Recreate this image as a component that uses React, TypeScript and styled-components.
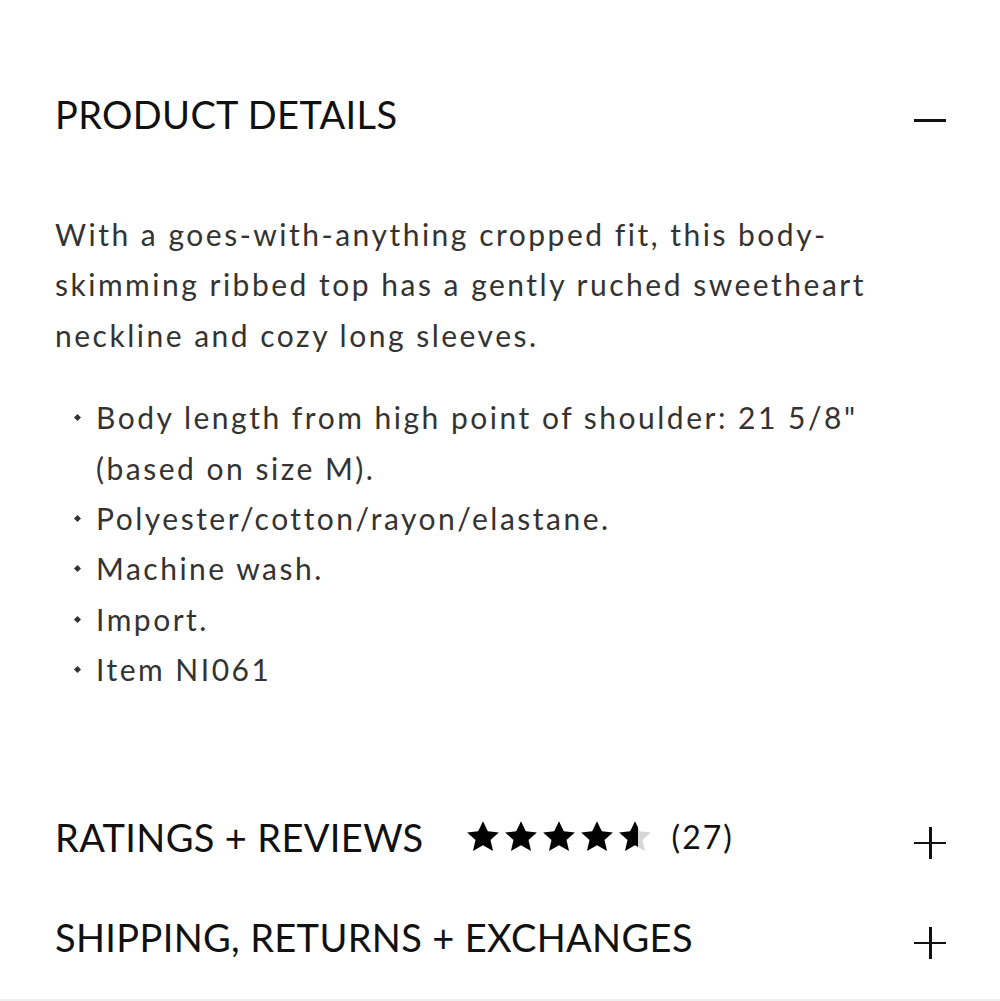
import React from "react";
import styled, { createGlobalStyle } from "styled-components";

const Global = createGlobalStyle`
  html, body { margin: 0; padding: 0; background: #fff; }
  body { font-family: "Lato", "Noto Sans", sans-serif; color: #1a1a1a; }
`;

const Page = styled.div`
  width: 1000px;
  height: 1001px;
  box-sizing: border-box;
  padding: 0 54px 0 55px;
  border-bottom: 2px solid #efefef;
  overflow: hidden;
`;

const Section = styled.section<{ $pt: number }>`
  padding-top: ${(p) => p.$pt}px;
`;

const Header = styled.div<{ $h: number }>`
  display: flex;
  align-items: center;
  height: ${(p) => p.$h}px;
`;

const Title = styled.h2`
  margin: 0;
  font-size: 38px;
  font-weight: 400;
  letter-spacing: 0.35px;
  color: #111;
  white-space: nowrap;
`;

const Spacer = styled.div`
  flex: 1;
`;

const Toggle = styled.div`
  width: 32px;
  height: 32px;
  position: relative;
  flex: none;
  margin-top: 12px;
`;

const Bar = styled.span<{ $vertical?: boolean }>`
  position: absolute;
  background: #111;
  ${(p) =>
    p.$vertical
      ? "left: 15px; top: 0; width: 2.5px; height: 32px;"
      : "left: 0; top: 15px; width: 32px; height: 2.5px;"}
`;

const Body = styled.div`
  font-size: 30px;
  line-height: 50.4px;
  letter-spacing: 2.5px;
  color: #333;
  margin-top: 67px;
`;

const Para = styled.p`
  margin: 0;
`;

const List = styled.ul`
  list-style: none;
  margin: 32px 0 0;
  padding: 0 0 0 41px;
`;

const Item = styled.li`
  position: relative;
  &::before {
    content: "";
    position: absolute;
    left: -21px;
    top: 23px;
    width: 5px;
    height: 5px;
    background: #333;
    transform: rotate(45deg);
  }
`;

const Stars = styled.div`
  display: flex;
  align-items: center;
  gap: 4px;
  margin-left: 42px;
`;

const Count = styled.span`
  font-size: 32px;
  color: #111;
  margin-left: 16px;
  letter-spacing: 2px;
`;

const STAR = "M12 0.8l3.4 7.2 7.8.8-5.9 5.3 1.8 7.8L12 17.8l-7.1 4.1 1.8-7.8L.8 8.8l7.8-.8z";

function Star({ fill, id }: { fill: number; id: string }) {
  return (
    <svg width="34" height="34" viewBox="0 0 24 24">
      <defs>
        <linearGradient id={id}>
          <stop offset={`${fill * 100}%`} stopColor="#000" />
          <stop offset={`${fill * 100}%`} stopColor="#d6d6d6" />
        </linearGradient>
      </defs>
      <path d={STAR} fill={`url(#${id})`} />
    </svg>
  );
}

function Toggler({ open }: { open: boolean }) {
  return (
    <Toggle>
      <Bar />
      {!open && <Bar $vertical />}
    </Toggle>
  );
}

const bullets = [
  'Body length from high point of shoulder: 21 5/8" (based on size M).',
  "Polyester/cotton/rayon/elastane.",
  "Machine wash.",
  "Import.",
  "Item NI061",
];

export default function App() {
  return (
    <>
      <Global />
      <Page>
        <Section $pt={86}>
          <Header $h={56}>
            <Title>PRODUCT DETAILS</Title>
            <Spacer />
            <Toggler open />
          </Header>
          <Body>
            <Para>
              With a goes-with-anything cropped fit, this body-skimming ribbed top has a gently
              ruched sweetheart neckline and cozy long sleeves.
            </Para>
            <List>
              {bullets.map((b) => (
                <Item key={b}>{b}</Item>
              ))}
            </List>
          </Body>
        </Section>
        <Section $pt={114}>
          <Header $h={56}>
            <Title>RATINGS + REVIEWS</Title>
            <Stars>
              {[1, 1, 1, 1, 0.6].map((f, i) => (
                <Star key={i} fill={f} id={`s${i}`} />
              ))}
              <Count>(27)</Count>
            </Stars>
            <Spacer />
            <Toggler open={false} />
          </Header>
        </Section>
        <Section $pt={44}>
          <Header $h={56}>
            <Title>SHIPPING, RETURNS + EXCHANGES</Title>
            <Spacer />
            <Toggler open={false} />
          </Header>
        </Section>
      </Page>
    </>
  );
}
